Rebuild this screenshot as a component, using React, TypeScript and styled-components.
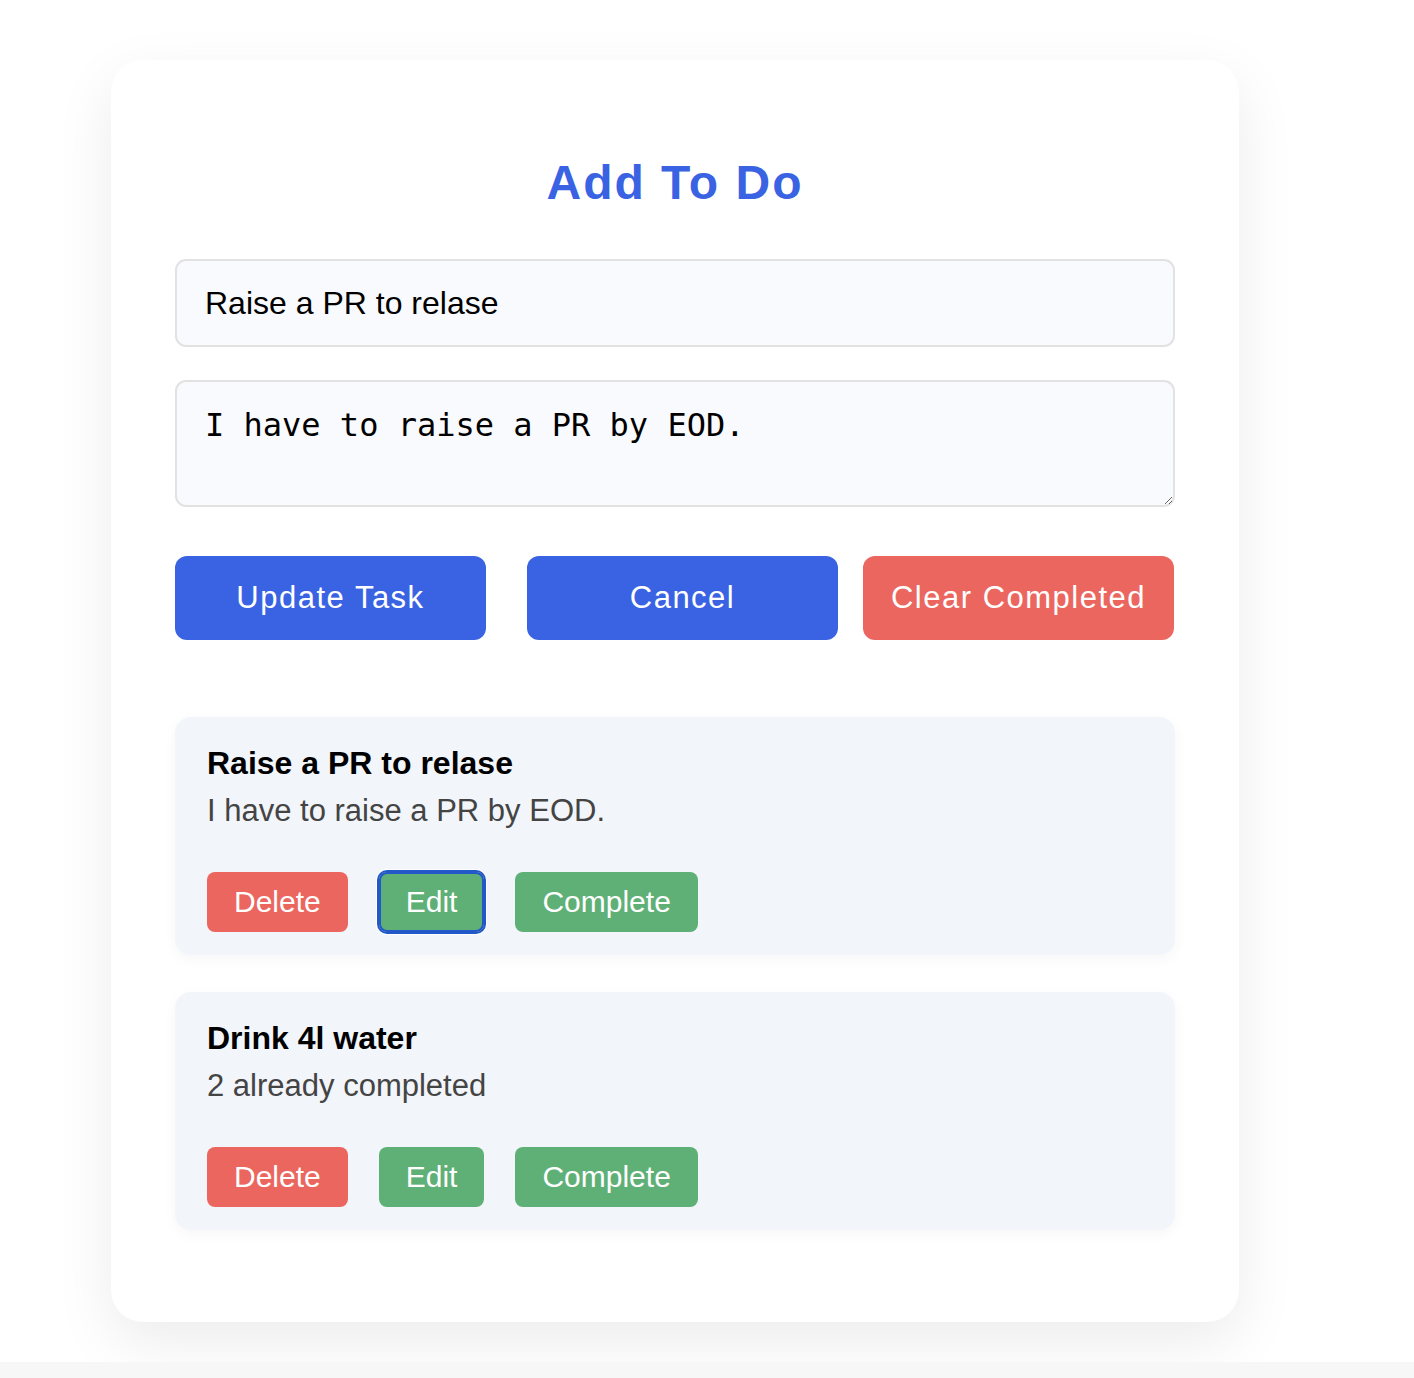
import React, { useState } from "react";
import styled, { createGlobalStyle } from "styled-components";

const GlobalStyle = createGlobalStyle`
  html, body {
    margin: 0;
    padding: 0;
    background: #f7f7f7;
    font-family: "Liberation Sans", Arial, Helvetica, sans-serif;
  }
  * { box-sizing: border-box; }
`;

const Page = styled.div`
  background: #ffffff;
  padding: 60px 0 40px 111px;
`;

const Card = styled.div`
  width: 1128px;
  background: #ffffff;
  border-radius: 32px;
  padding: 64px 64px 92px;
  box-shadow: 0 20px 60px rgba(0, 0, 0, 0.08);
  display: flex;
  flex-direction: column;
`;

const Title = styled.h1`
  margin: 31px 0 49px;
  text-align: center;
  color: #3a63e3;
  font-size: 48px;
  line-height: 55px;
  font-weight: 700;
  letter-spacing: 2px;
`;

const TextInput = styled.input`
  width: 100%;
  height: 88px;
  border: 2px solid #e2e2e2;
  border-radius: 11px;
  background: #f9fafd;
  padding: 0 28px;
  font-family: "Liberation Sans", Arial, sans-serif;
  font-size: 32px;
  color: #000;
  outline: none;
`;

const TextArea = styled.textarea`
  display: block;
  width: 100%;
  height: 127px;
  margin-top: 33px;
  border: 2px solid #e2e2e2;
  border-radius: 11px;
  background: #f9fafd;
  padding: 24px 28px;
  font-family: "DejaVu Sans Mono", "Liberation Mono", monospace;
  font-size: 32px;
  color: #000;
  outline: none;
`;

const ActionRow = styled.div`
  display: flex;
  margin-top: 49px;
`;

const ActionButton = styled.button<{ $variant: "primary" | "danger"; $offset?: number }>`
  width: 311px;
  height: 84px;
  margin-left: ${(p) => p.$offset ?? 0}px;
  border: none;
  border-radius: 12px;
  background: ${(p) => (p.$variant === "danger" ? "#ec6660" : "#3a63e3")};
  color: #ffffff;
  font-family: "Liberation Sans", Arial, sans-serif;
  font-size: 31px;
  letter-spacing: 1.5px;
  cursor: pointer;
`;

const TodoList = styled.div`
  display: flex;
  flex-direction: column;
  gap: 37px;
  margin-top: 77px;
`;

const TodoItem = styled.div`
  background: #f2f5fa;
  border-radius: 16px;
  padding: 28px 32px 23px;
  box-shadow: 0 4px 14px rgba(0, 0, 0, 0.04);
`;

const TodoTitle = styled.h3`
  margin: 0;
  font-size: 32px;
  line-height: 37px;
  font-weight: 700;
  color: #000;
`;

const TodoDesc = styled.p`
  margin: 10px 0 0;
  font-size: 31px;
  line-height: 37px;
  color: #444444;
`;

const TodoButtons = styled.div`
  display: flex;
  gap: 30px;
  margin-top: 43px;
`;

const SmallButton = styled.button<{ $variant: "danger" | "success"; $focused?: boolean }>`
  height: 60px;
  padding: 0 27px;
  margin-left: ${(p) => (p.$variant === "success" ? 1 : 0)}px;
  border: none;
  border-radius: 8px;
  background: ${(p) => (p.$variant === "danger" ? "#ec6660" : "#5fb077")};
  color: #ffffff;
  font-family: "Liberation Sans", Arial, sans-serif;
  font-size: 30px;
  cursor: pointer;
  ${(p) =>
    p.$focused
      ? `outline: 2px solid #2358c9; outline-offset: 0; box-shadow: inset 0 0 0 2px #2358c9, 0 0 0 3px #ffffff;`
      : ""}
`;

type Todo = { title: string; desc: string; focused?: boolean };

const todos: Todo[] = [
  { title: "Raise a PR to relase", desc: "I have to raise a PR by EOD.", focused: true },
  { title: "Drink 4l water", desc: "2 already completed" },
];

export default function App() {
  const [title, setTitle] = useState("Raise a PR to relase");
  const [desc, setDesc] = useState("I have to raise a PR by EOD.");
  return (
    <>
      <GlobalStyle />
      <Page>
        <Card>
          <Title>Add To Do</Title>
          <TextInput value={title} onChange={(e) => setTitle(e.target.value)} />
          <TextArea value={desc} onChange={(e) => setDesc(e.target.value)} />
          <ActionRow>
            <ActionButton $variant="primary">Update Task</ActionButton>
            <ActionButton $variant="primary" $offset={41}>Cancel</ActionButton>
            <ActionButton $variant="danger" $offset={25}>Clear Completed</ActionButton>
          </ActionRow>
          <TodoList>
            {todos.map((t) => (
              <TodoItem key={t.title}>
                <TodoTitle>{t.title}</TodoTitle>
                <TodoDesc>{t.desc}</TodoDesc>
                <TodoButtons>
                  <SmallButton $variant="danger">Delete</SmallButton>
                  <SmallButton $variant="success" $focused={t.focused}>Edit</SmallButton>
                  <SmallButton $variant="success">Complete</SmallButton>
                </TodoButtons>
              </TodoItem>
            ))}
          </TodoList>
        </Card>
      </Page>
    </>
  );
}
